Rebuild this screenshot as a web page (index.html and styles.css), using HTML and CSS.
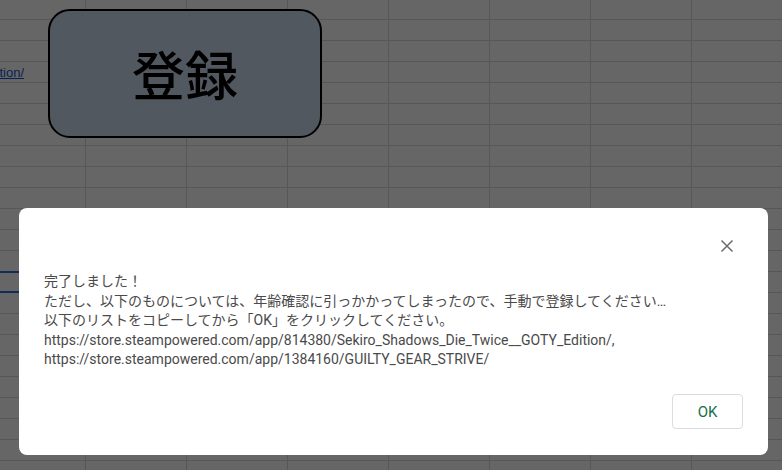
FILE: index.html
```html
<!DOCTYPE html>
<html lang="ja">
<head>
<meta charset="utf-8">
<title>登録</title>
<link rel="stylesheet" href="styles.css">
</head>
<body>
<div class="sheet">
  <div class="col-a">
    <div class="row first"></div>
    <div class="row"></div>
    <div class="row"></div>
    <div class="row link-row"><a class="link" href="#">https://store.steampowered.com/app/814380/Sekiro_Shadows_Die_Twice__GOTY_Edition/</a></div>
    <div class="row"></div>
    <div class="row"></div>
    <div class="row"></div>
    <div class="row"></div>
    <div class="row"></div>
    <div class="row"></div>
    <div class="row"></div>
    <div class="row"></div>
    <div class="row"></div>
    <div class="row selected"></div>
  </div>
  <button class="register">登録</button>
</div>

<div class="overlay">
  <div class="dialog">
    <div class="dialog-head">
      <span class="close" aria-label="閉じる">
        <svg width="14" height="14" viewBox="0 0 14 14"><path d="M1.5 1.5 L12.5 12.5 M12.5 1.5 L1.5 12.5" stroke="#6b6b6b" stroke-width="1.5" fill="none"/></svg>
      </span>
    </div>
    <div class="dialog-body">
      <p>完了しました！</p>
      <p>ただし、以下のものについては、年齢確認に引っかかってしまったので、手動で登録してください…</p>
      <p>以下のリストをコピーしてから「OK」をクリックしてください。</p>
      <p>https://store.steampowered.com/app/814380/Sekiro_Shadows_Die_Twice__GOTY_Edition/,</p>
      <p>https://store.steampowered.com/app/1384160/GUILTY_GEAR_STRIVE/</p>
    </div>
    <div class="dialog-foot">
      <button class="ok">OK</button>
    </div>
  </div>
</div>
</body>
</html>
```

FILE: styles.css
```css
html, body {
  margin: 0;
  padding: 0;
  width: 782px;
  height: 470px;
  overflow: hidden;
}
body {
  font-family: Roboto, Arial, "Noto Sans CJK JP", sans-serif;
  background: #fff;
  position: relative;
}
.sheet {
  width: 782px;
  height: 470px;
  position: relative;
  background-color: #fff;
  background-image:
    linear-gradient(to right, transparent 100px, #d9d9d9 100px),
    linear-gradient(to bottom, transparent 20px, #d9d9d9 20px);
  background-size: 101px 100%, 100% 21px;
  background-position: -15px 0, 0 -1px;
}
.col-a {
  width: 85px;
  display: flex;
  flex-direction: column;
}
.row {
  height: 21px;
  box-sizing: border-box;
}
.row.first {
  height: 19px;
}
.link-row {
  display: flex;
  justify-content: flex-end;
  width: 24px;
  overflow: hidden;
  align-items: center;
  padding-top: 2px;
}
.link {
  font-family: Arial, "Liberation Sans", sans-serif;
  font-size: 13px;
  color: #1155cc;
  text-decoration: underline;
  white-space: nowrap;
  flex-shrink: 0;
}
.row.selected {
  height: 22px;
  border-top: 2px solid #2f6fe0;
  border-bottom: 2px solid #2f6fe0;
}
.register {
  position: absolute;
  left: 48px;
  top: 9px;
  width: 274px;
  height: 129px;
  box-sizing: border-box;
  border: 2px solid #000;
  border-radius: 22px;
  background: #cddcf0;
  font-family: "Noto Sans CJK JP", sans-serif;
  font-size: 53px;
  font-weight: 500;
  color: #000;
  padding: 0;
  line-height: 1;
}
.overlay {
  position: absolute;
  inset: 0;
  background: rgba(0, 0, 0, 0.6);
}
.dialog {
  position: absolute;
  left: 19px;
  top: 208px;
  width: 749px;
  height: 247px;
  box-sizing: border-box;
  background: #fff;
  border-radius: 8px;
  padding: 0 25px 26px 25px;
  display: flex;
  flex-direction: column;
}
.dialog-head {
  display: flex;
  justify-content: flex-end;
  padding-top: 31px;
  height: 32px;
  margin-right: 9px;
}
.close {
  width: 14px;
  height: 14px;
  display: block;
}
.close svg {
  display: block;
}
.dialog-body {
  color: #4a4a4a;
  font-size: 14px;
  line-height: 19.5px;
  padding-top: 1px;
}
.dialog-body p {
  margin: 0;
  white-space: nowrap;
}
.dialog-foot {
  margin-top: auto;
  display: flex;
  justify-content: flex-end;
}
.ok {
  width: 71px;
  height: 35px;
  box-sizing: border-box;
  border: 1px solid #dadce0;
  border-radius: 4px;
  background: #fff;
  color: #16704a;
  font-family: Roboto, Arial, sans-serif;
  font-size: 15px;
  font-weight: 400;
  padding: 0;
}
```
